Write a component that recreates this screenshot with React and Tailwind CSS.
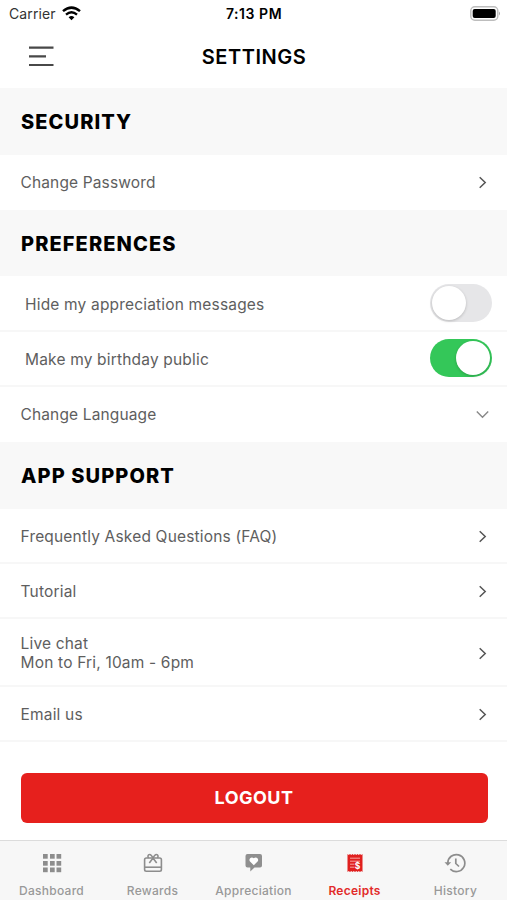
function StatusBar() {
  return (
    <div className="grid h-7 grid-cols-[1fr_100px_1fr] items-center text-black">
      <div className="flex items-center gap-[6px] pl-[9px]">
        <span className="text-[14px] leading-7 tracking-[0.1px] text-[#333]">Carrier</span>
        <svg className="-mt-[2px] h-[15px] w-[19px]" viewBox="0 0 19 15" fill="none" stroke="#000">
          <path d="M1 5.1Q9.500-1.900 18 5.100" strokeWidth="2.500" />
          <path d="M4 8.600Q9.500 4 15 8.600" strokeWidth="2.400" />
          <path d="M6.600 11.300Q9.500 8.700 12.400 11.300L9.500 14.300Z" fill="#000" stroke="none" />
        </svg>
      </div>
      <span className="pl-px text-center text-[14px] font-semibold leading-7 tracking-[0.55px]">7:13 PM</span>
      <svg className="-mt-[2px] mr-[6px] h-[15px] w-[31px] justify-self-end" viewBox="0 0 31 15">
        <rect x="0.8" y="0.8" width="27" height="13.400" rx="4" fill="#fff" stroke="#bdbdbd" strokeWidth="1.400" />
        <rect x="2.700" y="2.900" width="23" height="9.200" rx="2" fill="#000" />
        <path d="M29 5.500Q31 7.500 29 9.500Z" fill="#aaa" />
      </svg>
    </div>
  );
}

function Header() {
  return (
    <header className="grid h-[60px] grid-cols-[80px_1fr_80px] items-center pb-[2px]">
      <svg className="ml-[29px] h-[22px] w-[25px]" viewBox="0 0 25 22" fill="none" stroke="#484848" strokeWidth="2.200">
        <path d="M0 1.700H24.500M0 10.400H17M0 19H24.500" />
      </svg>
      <h1 className="pl-px text-center text-[20px] font-semibold leading-6 tracking-[0.55px] text-black">SETTINGS</h1>
    </header>
  );
}

function SectionTitle({ children, className }) {
  return (
    <h2 className={"flex items-center bg-[#f8f8f8] pl-[21px] text-[20px] font-extrabold tracking-[1.1px] text-black " + className}>
      {children}
    </h2>
  );
}

function Chevron({ down }) {
  return down ? (
    <svg className="mr-[18px] h-[9px] w-[13px]" viewBox="0 0 13 9" fill="none" stroke="#888" strokeWidth="1.400">
      <path d="M0.800 1.500L6.500 7.200L12.200 1.500" />
    </svg>
  ) : (
    <svg className="mr-[20px] h-[13px] w-[8px]" viewBox="0 0 8 13" fill="none" stroke="#555" strokeWidth="1.500">
      <path d="M0.700 1.200L6.200 6.500L0.700 11.800" />
    </svg>
  );
}

function Toggle({ on }) {
  return (
    <span
      role="switch"
      aria-checked={on}
      className={"mr-[15px] flex h-[38px] w-[62px] items-center rounded-full p-[2px] " + (on ? "-mt-[4px] justify-end bg-[#34c759]" : "-mt-[3px] bg-[#e6e6e8]")}
    >
      <span className="size-[34px] rounded-full bg-white shadow-[0_1px_3px_rgba(0,0,0,0.2)]" />
    </span>
  );
}

function Row({ children, last, className = "h-[55px] pl-[20.5px]", end }) {
  return (
    <div className={"flex items-center justify-between text-[15.5px] leading-[19px] text-[#5e5e5e] " + className + (last ? " tracking-[0.14px]" : " border-b-2 border-[#f7f7f7] pt-[2px] tracking-[0.18px]")}>
      <div>{children}</div>
      {end || <Chevron />}
    </div>
  );
}

function Grid() {
  return (
    <svg className="h-[20px] w-[20px]" viewBox="0 0 20 20" fill="#8d8d8d">
      {[1, 8, 14.500].map((y) =>
        [1, 8, 14.500].map((x) => <rect key={x + "-" + y} x={x} y={y} width="4.700" height="4.700" />)
      )}
    </svg>
  );
}

function Gift() {
  return (
    <svg className="h-[20px] w-[20px]" viewBox="0 0 20 20" fill="none" stroke="#8d8d8d" strokeWidth="1.600">
      <rect x="1.600" y="5" width="16.800" height="13.200" rx="1.700" />
      <path d="M1.600 14.200H18.400" />
      <path d="M10 5C8.800 2.700 8 1.500 6.700 1.500C4.600 1.500 4.600 4 5.600 5M10 5C11.200 2.700 12 1.500 13.300 1.500C15.400 1.500 15.400 4 14.400 5M6.300 10L10 5L13.700 10" />
    </svg>
  );
}

function MessageHeart() {
  return (
    <svg className="h-[20px] w-[20px]" viewBox="0 0 20 20">
      <path d="M3.500 1H16Q18 1 18 3V12.500Q18 14.500 16 14.500H10.500L6.300 18.500V14.500H3.500Q1.500 14.500 1.500 12.500V3Q1.500 1 3.500 1Z" fill="#8f8f8f" />
      <path d="M9.800 12.200L6 8.400C4.100 6.300 7.300 2.800 9.800 5.300C12.300 2.800 15.500 6.300 13.600 8.400Z" fill="#fff" />
    </svg>
  );
}

function Receipt() {
  return (
    <svg className="h-[20px] w-[20px]" viewBox="0 0 20 20">
      <path d="M2.500 1L3.750 2L5 1L6.250 2L7.500 1L8.750 2L10 1L11.250 2L12.500 1L13.750 2L15 1L16.250 2L17.500 1V19L16.250 18L15 19L13.750 18L12.500 19L11.250 18L10 19L8.750 18L7.500 19L6.250 18L5 19L3.750 18L2.500 19Z" fill="#e0201f" />
      <path d="M5 5.200H15M5 8.200H15M5 11.200H9.500M5 14.200H9.500" stroke="#f7a09e" strokeWidth="1" />
      <rect x="9.800" y="9.200" width="6" height="7.500" fill="#e0201f" />
      <text x="12.700" y="15.900" textAnchor="middle" fontSize="8.500" fontWeight="700" fill="#fff">$</text>
    </svg>
  );
}

function Clock() {
  return (
    <svg className="-ml-px h-[20px] w-[22px]" viewBox="0 0 22 20" fill="none" stroke="#8d8d8d" strokeWidth="1.700">
      <path d="M3.800 10A8.500 8.500 0 1 1 6.300 16.100" />
      <path d="M0.500 9.300H7.200L3.800 12.800Z" fill="#8d8d8d" stroke="none" />
      <path d="M11.800 5.500V10.500L15 13.500" />
    </svg>
  );
}

function Tab({ icon, label, active }) {
  return (
    <div className={"flex flex-col items-center pt-[11px] text-[12px] " + (active ? "font-semibold tracking-[0.25px] text-[#e22b2a]" : "font-medium tracking-[0.27px] text-[#999]")}>
      <span className="flex h-[22px] items-center">{icon}</span>
      <span className="mt-[9px] leading-[16px]">{label}</span>
    </div>
  );
}

export default function App() {
  return (
    <div className="flex h-[900px] w-[507px] flex-col overflow-hidden bg-white font-[Inter,sans-serif]">
      <StatusBar />
      <Header />
      <SectionTitle className="h-[67px]">SECURITY</SectionTitle>
      <Row last>Change Password</Row>
      <SectionTitle className="h-[66px] pt-[2px]">PREFERENCES</SectionTitle>
      <Row className="h-[56px] pl-[25px]" end={<Toggle on={false} />}>Hide my appreciation messages</Row>
      <Row className="h-[55px] pl-[25px]" end={<Toggle on />}>Make my birthday public</Row>
      <Row last end={<Chevron down />}>Change Language</Row>
      <SectionTitle className="h-[67px]">APP SUPPORT</SectionTitle>
      <Row>Frequently Asked Questions (FAQ)</Row>
      <Row>Tutorial</Row>
      <Row className="h-[68px] pl-[20.5px]">
        <p>Live chat</p>
        <p>Mon to Fri, 10am - 6pm</p>
      </Row>
      <Row>Email us</Row>
      <button className="ml-[20.5px] mr-[19.5px] mt-[30.5px] h-[50.5px] shrink-0 rounded-[6px] bg-[#e6201d] text-[18px] font-bold tracking-[0.45px] text-white">
        LOGOUT
      </button>
      <nav className="mt-auto grid h-[60px] shrink-0 grid-cols-5 border-t border-[#dcdcdc] bg-[#f7f7f7] px-[1px]">
        <Tab icon={<Grid />} label="Dashboard" />
        <Tab icon={<Gift />} label="Rewards" />
        <Tab icon={<MessageHeart />} label="Appreciation" />
        <Tab icon={<Receipt />} label="Receipts" active />
        <Tab icon={<Clock />} label="History" />
      </nav>
    </div>
  );
}
